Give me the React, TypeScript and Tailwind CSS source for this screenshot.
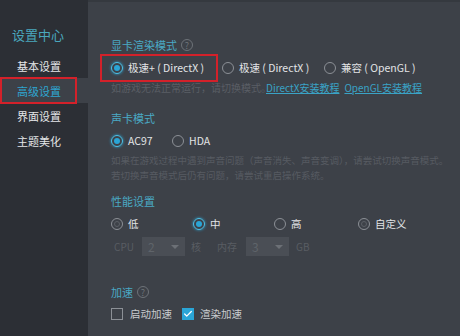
import { Check } from "lucide-react";

const font = { fontFamily: '"Noto Sans CJK SC", "Noto Sans", sans-serif' };

const Radio = ({ checked = false, faint = false }: { checked?: boolean; faint?: boolean }) => (
  <span
    className={`w-[12px] h-[12px] shrink-0 rounded-full border flex items-center justify-center ${
      checked ? "border-[#4cc3ea] shadow-[0_0_3px_#2aa8d8]" : "border-[#8c9096]"
    }`}
  >
    {checked && <span className="w-[6px] h-[6px] rounded-full bg-[#2aa5d6]" />}
    {faint && <span className="w-[6px] h-[6px] rounded-full border border-[#5c6066]" />}
  </span>
);

const Option = ({ label, checked, faint, w }: { label: string; checked?: boolean; faint?: boolean; w: string }) => (
  <div className={`flex items-center gap-[5px] ${w}`}>
    <Radio checked={checked} faint={faint} />
    <span className="text-[10.5px] leading-[16px] text-[#e2e4e6] whitespace-nowrap">{label}</span>
  </div>
);

const Heading = ({ text, help }: { text: string; help?: boolean }) => (
  <div className="flex items-center gap-[4px] h-[16px]">
    <span className="text-[11px] leading-[16px] text-[#4aa9c4]">{text}</span>
    {help && (
      <span className="w-[12px] h-[12px] rounded-full border border-[#6d7278] text-[#6d7278] text-[9px] leading-none flex items-center justify-center">
        ?
      </span>
    )}
  </div>
);

const Select = ({ value }: { value: string }) => (
  <div className="w-[43px] h-[19px] bg-[#4a4e55] flex items-center justify-between px-[6px]">
    <span className="text-[12px] leading-[19px] text-[#5f646a]">{value}</span>
    <span className="w-0 h-0 border-l-[4px] border-r-[4px] border-t-[4px] border-l-transparent border-r-transparent border-t-[#6c7076]" />
  </div>
);

export default function App() {
  const items = ["基本设置", "高级设置", "界面设置", "主题美化"];
  return (
    <div className="w-[460px] h-[336px] flex overflow-hidden bg-[#3d4148]" style={font}>
      {/* sidebar */}
      <div className="w-[88px] shrink-0 bg-[#2c2f35] flex flex-col pt-[26px]">
        <div className="pl-[12px] text-[13px] text-[#4aa7bd] h-[18px] leading-[18px]">设置中心</div>
        <div className="mt-[9px] flex flex-col">
          {items.map((it, i) => (
            <div
              key={it}
              className={`relative h-[25px] flex items-center pl-[17px] text-[11px] leading-[16px] ${
                i === 1 ? "bg-[#3d4148] text-[#2ea6d2]" : "text-[#e4e6e8]"
              }`}
            >
              {it}
              {i === 1 && <span className="absolute left-0 top-[-1px] w-[77px] h-[27px] border-2 border-[#d3212a]" />}
            </div>
          ))}
        </div>
      </div>

      {/* content */}
      <div className="flex-1 flex flex-col pl-[23px] pt-[35px] border-t-2 border-[#35393f]">
        <Heading text="显卡渲染模式" help />
        <div className="relative flex items-center mt-[7px] h-[16px]">
          <span className="absolute left-[-11px] top-[-6px] w-[118px] h-[28px] border-2 border-[#d3212a]" />
          <Option label="极速+ ( DirectX )" checked w="w-[111px]" />
          <Option label="极速 ( DirectX )" w="w-[102px]" />
          <Option label="兼容 ( OpenGL )" w="w-[100px]" />
        </div>
        <div className="flex items-center mt-[4px] h-[16px] text-[10px] leading-[16px] whitespace-nowrap">
          <span className="text-[#5a5e65] w-[155px]">如游戏无法正常运行，请切换模式。</span>
          <span className="text-[#3aa3c6] underline">DirectX安装教程</span>
          <span className="text-[#3aa3c6] underline ml-[5px]">OpenGL安装教程</span>
        </div>

        <div className="mt-[14px]">
          <Heading text="声卡模式" />
        </div>
        <div className="flex items-center mt-[7px] h-[16px]">
          <Option label="AC97" checked w="w-[61px]" />
          <Option label="HDA" w="w-[60px]" />
        </div>
        <div className="mt-[4px] text-[9.5px] leading-[15px] text-[#575b62] whitespace-nowrap">
          <div>如果在游戏过程中遇到声音问题（声音消失、声音变调），请尝试切换声音模式。</div>
          <div>若切换声音模式后仍有问题，请尝试重启操作系统。</div>
        </div>

        <div className="mt-[10px]">
          <Heading text="性能设置" />
        </div>
        <div className="flex items-center mt-[7px] h-[16px]">
          <Option label="低" faint w="w-[82px]" />
          <Option label="中" checked w="w-[81px]" />
          <Option label="高" w="w-[84px]" />
          <Option label="自定义" faint w="w-[70px]" />
        </div>
        <div className="flex items-center mt-[5px] h-[19px] text-[10px] leading-[16px] text-[#595d63]">
          <span className="w-[31px] pl-[3px]">CPU</span>
          <Select value="2" />
          <span className="ml-[6px] w-[26px]">核</span>
          <span className="w-[29px]">内存</span>
          <Select value="3" />
          <span className="ml-[7px]">GB</span>
        </div>

        <div className="mt-[28px]">
          <Heading text="加速" help />
        </div>
        <div className="flex items-center mt-[6px] h-[16px]">
          <div className="flex items-center gap-[7px] w-[71px]">
            <span className="w-[12px] h-[12px] border border-[#8c9096]" />
            <span className="text-[10.5px] leading-[16px] text-[#c9cbce]">启动加速</span>
          </div>
          <div className="flex items-center gap-[6px]">
            <span className="w-[12px] h-[12px] bg-[#2aa5d6] flex items-center justify-center">
              <Check size={10} strokeWidth={3} color="#ffffff" />
            </span>
            <span className="text-[10.5px] leading-[16px] text-[#c9cbce]">渲染加速</span>
          </div>
        </div>
      </div>
    </div>
  );
}
